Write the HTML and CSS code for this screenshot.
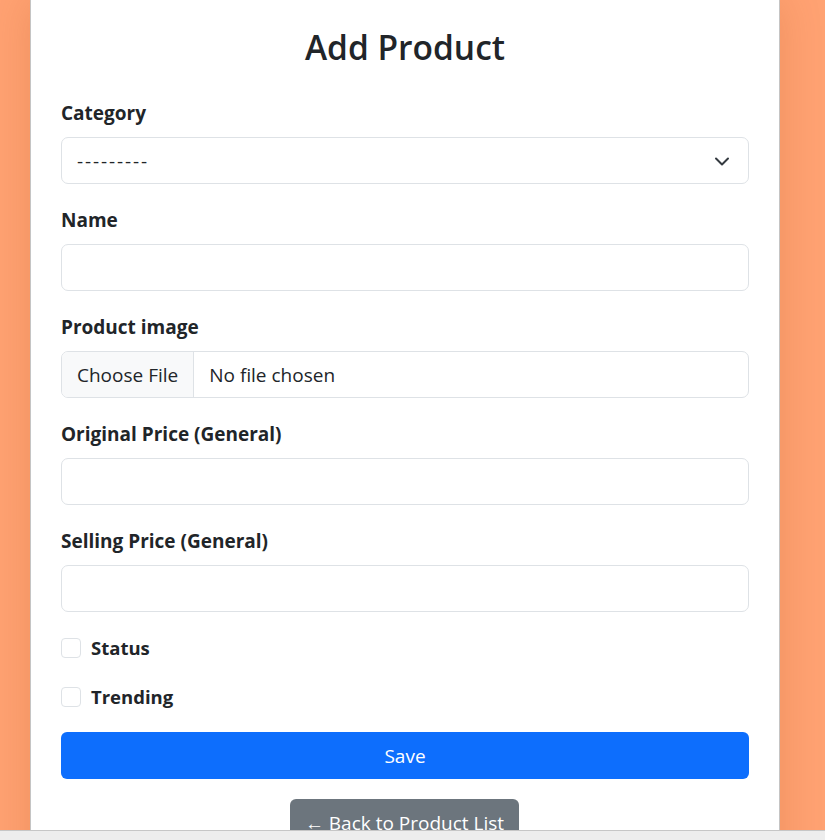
FILE: index.html
```html
<!DOCTYPE html>
<html lang="en">
<head>
<meta charset="utf-8">
<title>Add Product</title>
<link rel="stylesheet" href="styles.css">
</head>
<body>
<div class="page">
  <div class="card">
    <h2 class="title">Add Product</h2>
    <form class="form">
      <div class="field">
        <label class="label">Category</label>
        <div class="control select">
          <span class="value">---------</span>
          <svg class="chevron" width="16" height="12" viewBox="0 0 16 12"><path d="M2 3.5l6 6 6-6" fill="none" stroke="#343a40" stroke-width="2" stroke-linecap="round" stroke-linejoin="round"/></svg>
        </div>
      </div>
      <div class="field">
        <label class="label">Name</label>
        <div class="control"></div>
      </div>
      <div class="field">
        <label class="label">Product image</label>
        <div class="control file">
          <span class="file-btn">Choose File</span>
          <span class="file-name">No file chosen</span>
        </div>
      </div>
      <div class="field">
        <label class="label">Original Price (General)</label>
        <div class="control"></div>
      </div>
      <div class="field">
        <label class="label">Selling Price (General)</label>
        <div class="control"></div>
      </div>
      <div class="check">
        <span class="box"></span>
        <span class="check-label">Status</span>
      </div>
      <div class="check">
        <span class="box"></span>
        <span class="check-label">Trending</span>
      </div>
      <div class="btn btn-save">Save</div>
      <div class="back-row">
        <div class="btn btn-back">← Back to Product List</div>
      </div>
    </form>
  </div>
</div>
<div class="hbar"></div>
</body>
</html>
```

FILE: styles.css
```css
html, body {
  margin: 0;
  padding: 0;
}
body {
  background: #ffa272;
  font-family: "Open Sans", "Noto Sans", "Liberation Sans", sans-serif;
  color: #212529;
  overflow: hidden;
  height: 840px;
}
.page {
  padding-left: 30px;
}
.card {
  width: 750px;
  background: #fff;
  border-left: 1px solid #c4c4c4;
  border-right: 1px solid #c4c4c4;
  box-shadow: 0 0 40px rgba(160, 60, 10, 0.18);
  padding: 27px 30px 40px;
  box-sizing: border-box;
  min-height: 900px;
}
.title {
  margin: 0 0 32px;
  text-align: center;
  font-size: 33.5px;
  font-weight: 600;
  line-height: 41px;
}
.field {
  margin-bottom: 23px;
}
.label {
  display: block;
  font-weight: 700;
  font-size: 19px;
  line-height: 27px;
  margin-bottom: 10px;
}
.control {
  height: 47px;
  box-sizing: border-box;
  border: 1px solid #dee2e6;
  border-radius: 7px;
  display: flex;
  align-items: center;
  font-size: 19px;
  background: #fff;
}
.select {
  padding: 0 18px 0 15px;
  justify-content: space-between;
}
.value {
  letter-spacing: 1.9px;
}
.chevron {
  display: block;
}
.file {
  overflow: hidden;
}
.file-btn {
  height: 100%;
  display: flex;
  align-items: center;
  padding: 0 15px;
  background: #f8f9fa;
  border-right: 1px solid #dee2e6;
}
.file-name {
  padding-left: 15px;
}
.check {
  display: flex;
  align-items: center;
  gap: 10px;
  height: 25px;
  margin-top: 0;
}
.check + .check {
  margin-top: 24px;
}
.box {
  width: 20px;
  height: 20px;
  box-sizing: border-box;
  border: 1px solid #dee2e6;
  border-radius: 4px;
  background: #fff;
}
.check-label {
  font-weight: 700;
  font-size: 18.5px;
}
.btn {
  height: 47px;
  border-radius: 6px;
  display: flex;
  align-items: center;
  justify-content: center;
  font-size: 19px;
  color: #fff;
  box-sizing: border-box;
}
.btn-save {
  background: #0d6efd;
  margin-top: 23px;
}
.back-row {
  display: flex;
  justify-content: center;
  margin-top: 20px;
}
.btn-back {
  background: #6c757d;
  padding: 0 12px;
  width: 229px;
  margin-right: 1px;
  white-space: nowrap;
}
.hbar {
  position: fixed;
  left: 0;
  right: 0;
  bottom: 0;
  height: 9px;
  background: #ededed;
  border-top: 1px solid #c6c6c6;
}
```
